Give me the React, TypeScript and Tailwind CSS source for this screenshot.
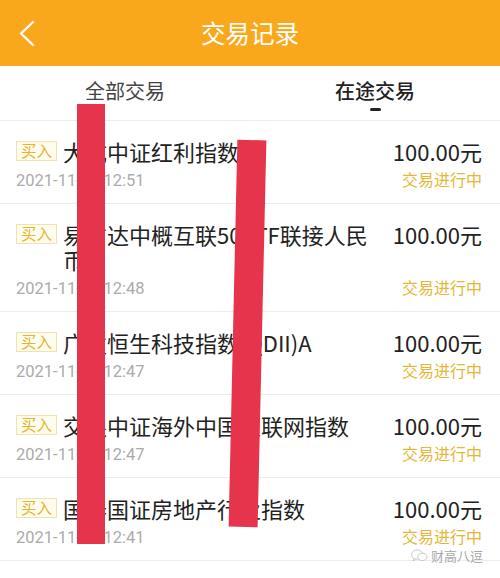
import React from "react";

type Trade = {
  name: string;
  time: string;
  amount: string;
};

const trades: Trade[] = [
  { name: "大成中证红利指数", time: "2021-11-26 12:51", amount: "100.00元" },
  { name: "易方达中概互联50ETF联接人民币", time: "2021-11-26 12:48", amount: "100.00元" },
  { name: "广发恒生科技指数(QDII)A", time: "2021-11-26 12:47", amount: "100.00元" },
  { name: "交银中证海外中国互联网指数", time: "2021-11-26 12:47", amount: "100.00元" },
  { name: "国泰国证房地产行业指数", time: "2021-11-26 12:41", amount: "100.00元" },
];

const TradeRow: React.FC<{ trade: Trade }> = ({ trade }) => (
  <div className="flex border-b border-[#ececec] pt-[18px] pb-[12px] pl-[16px] pr-[18px]">
    {/* left: badge + name, date */}
    <div className="flex min-w-0 flex-1 flex-col">
      <div className="flex items-start">
        <span className="mt-[2px] flex h-[20px] w-[41px] shrink-0 items-center justify-center border border-[#f1e3ad] bg-[#fffcee] text-[15.5px] leading-none text-[#e3b536]">
          买入
        </span>
        <p className="ml-[6px] mr-[20px] min-w-0 text-[22px] leading-[25px] text-[#222]">
          {trade.name}
        </p>
      </div>
      <p
        className="mt-[7px] text-[16.5px] leading-[20px] text-[#ababab]"
        style={{ fontFamily: 'Roboto, "Noto Sans", sans-serif' }}
      >
        {trade.time}
      </p>
    </div>

    {/* right: amount, status */}
    <div className="flex shrink-0 flex-col items-end justify-between">
      <p className="text-[22px] leading-[25px] text-[#222]">{trade.amount}</p>
      <p className="mb-[3px] text-[16px] leading-[17px] text-[#e6b737]">交易进行中</p>
    </div>
  </div>
);

export default function App() {
  return (
    <div
      className="relative h-[578px] w-[500px] overflow-hidden bg-white"
      style={{ fontFamily: '"Noto Sans CJK SC", "Noto Sans", sans-serif' }}
    >
      {/* Header */}
      <div className="relative flex h-[66px] items-center justify-center bg-[#f9a81b]">
        <svg
          className="absolute left-[18px] top-[20px]"
          width="18"
          height="28"
          viewBox="0 0 18 28"
          fill="none"
        >
          <polyline
            points="15,2 3,13.5 15,25"
            stroke="#fff"
            strokeWidth="2.4"
            strokeLinecap="round"
            strokeLinejoin="round"
          />
        </svg>
        <h1 className="text-[24.5px] leading-none text-white">交易记录</h1>
      </div>

      {/* Tabs */}
      <div className="flex h-[55px] border-b border-[#ececec]">
        <div className="flex flex-1 flex-col items-center pt-[13px]">
          <span className="text-[20px] leading-[24px] text-[#444]">全部交易</span>
        </div>
        <div className="flex flex-1 flex-col items-center pt-[13px]">
          <span className="text-[20px] font-medium leading-[24px] text-[#222]">在途交易</span>
          <span className="mt-[5px] h-[3px] w-[11px] rounded-full bg-[#222]" />
        </div>
      </div>

      {/* List */}
      <div>
        {trades.map((t, i) => (
          <TradeRow key={i} trade={t} />
        ))}
      </div>

      {/* marker strokes over the list */}
      <div className="absolute left-[77px] top-[104px] h-[440px] w-[28px] bg-[#e5344b]" />
      <div className="absolute left-[233px] top-[140px] h-[387px] w-[29px] rotate-[1.3deg] bg-[#e5344b]" />

      {/* watermark */}
      <div className="absolute left-[410px] top-[549px] flex items-center gap-[2px] text-[13px] leading-[13px] text-[#a9a9a9]">
        <svg width="19" height="13" viewBox="0 0 19 14" fill="none" stroke="#c4c4c4" strokeWidth="1">
          <ellipse cx="7" cy="6" rx="6" ry="5" />
          <ellipse cx="12.5" cy="8.5" rx="5" ry="4" fill="#fff" />
          <path d="M3 10.5 L2.5 13 L5 11.3" />
        </svg>
        <span>财高八逗</span>
      </div>
    </div>
  );
}
